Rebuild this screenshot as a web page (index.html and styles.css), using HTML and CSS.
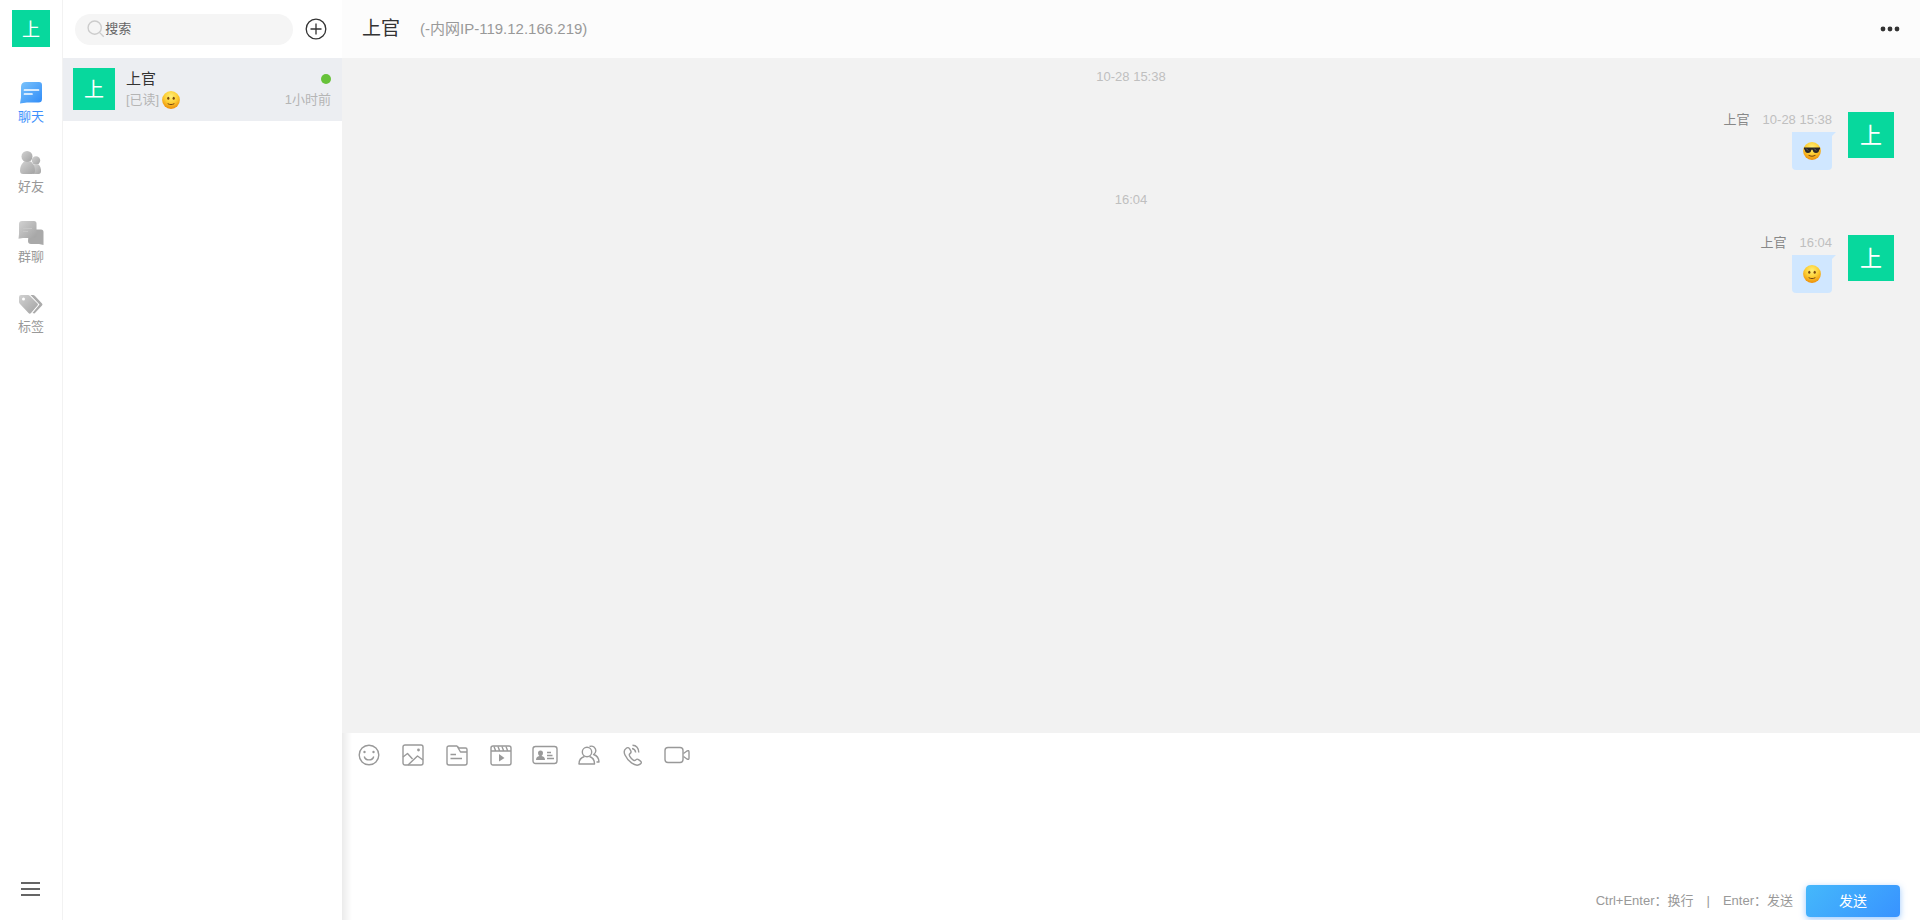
FILE: index.html
```html
<!DOCTYPE html>
<html lang="zh-CN">
<head>
    <meta charset="UTF-8">
    <meta name="viewport" content="width=device-width, initial-scale=1.0">
    <title>聊天</title>
    <link rel="stylesheet" href="styles.css">
</head>
<body>
    <!-- shared gradients and emoji -->
    <svg class="defs" width="0" height="0" aria-hidden="true">
        <defs>
            <linearGradient id="blue" x1="0" y1="0" x2="1" y2="1">
                <stop offset="0" stop-color="#7cc4fb"/>
                <stop offset="1" stop-color="#2f8bf8"/>
            </linearGradient>
            <linearGradient id="grey" x1="0" y1="0" x2="1" y2="1">
                <stop offset="0" stop-color="#d2d2d2"/>
                <stop offset="1" stop-color="#a2a2a2"/>
            </linearGradient>
            <radialGradient id="face" cx="0.5" cy="0.3" r="0.72">
                <stop offset="0" stop-color="#fff07a"/>
                <stop offset="0.5" stop-color="#fdcf35"/>
                <stop offset="1" stop-color="#ec8a05"/>
            </radialGradient>
            <symbol id="emoji-smile" viewBox="0 0 18 18">
                <circle cx="9" cy="9" r="8.9" fill="url(#face)"/>
                <ellipse cx="6.3" cy="7.3" rx="1.1" ry="1.5" fill="#7a4a10"/>
                <ellipse cx="11.7" cy="7.3" rx="1.1" ry="1.5" fill="#7a4a10"/>
                <path d="M6 12.8c1.800 1.100 4.200 1.100 6 0" fill="none" stroke="#7a4a10" stroke-width="1" stroke-linecap="round"/>
            </symbol>
            <symbol id="emoji-cool" viewBox="0 0 18 18">
                <circle cx="9" cy="9" r="8.9" fill="url(#face)"/>
                <path d="M1 5.400h16v1.800l-.8.600c-.3 2.400-1.200 3.200-3.200 3.200-2 0-2.900-1-3.400-3.200h-1.200c-.5 2.200-1.400 3.200-3.400 3.200s-2.900-.8-3.200-3.200L1 7.200z" fill="#2a2624"/>
                <path d="M3.200 6.600l2 2M11.200 6.600l2 2" stroke="#777" stroke-width="0.8"/>
                <path d="M6 13.400c2 1.200 4 1.200 6 0" fill="none" stroke="#7a4a10" stroke-width="1.1" stroke-linecap="round"/>
            </symbol>
        </defs>
    </svg>

    <div class="app">
        <nav class="nav">
            <div class="avatar avatar-nav">上</div>
            <div class="nav-items">
                <a class="nav-item active" href="#chat">
                    <svg viewBox="0 0 24 24">
                        <path d="M7 1h13q3 0 3 3v14q0 3.500-3.500 3.500H8L1 22.500l1-6V6q0-5 5-5z" fill="url(#blue)"/>
                        <path d="M5.500 9h14M5.500 13h7.500" stroke="#fff" stroke-width="1.700" stroke-linecap="round"/>
                    </svg>
                    <span>聊天</span>
                </a>
                <a class="nav-item" href="#friends">
                    <svg viewBox="0 0 24 24">
                        <circle cx="17" cy="9.500" r="4.200" fill="url(#grey)"/>
                        <path d="M14 13.500h5.500q2.500 2 2.500 6.500 0 3-2.500 3H14z" fill="url(#grey)"/>
                        <path d="M5 10.500h7q4 4 4 9 0 3.500-3 3.500H4q-3 0-3-3.500 0-5 4-9z" fill="url(#grey)"/>
                        <circle cx="8" cy="5.500" r="5.500" fill="url(#grey)"/>
                    </svg>
                    <span>好友</span>
                </a>
                <a class="nav-item" href="#groups">
                    <svg class="wide" viewBox="0 0 26 24">
                        <path d="M11 8.500h12q2.500 0 2.500 2.500v13l-4.500-1h-8q-3 0-3-3z" fill="#a9a9a9"/>
                        <path d="M4 0h12q2.500 0 2.500 2.500V14q0 3-3 3H5l-4.500.8L1 13V3q0-3 3-3z" fill="url(#grey)"/>
                        <path d="M5 7.500h9M5 10.500h5" stroke="#c6c6c6" stroke-width="1"/>
                    </svg>
                    <span>群聊</span>
                </a>
                <a class="nav-item" href="#tags">
                    <svg viewBox="0 0 24 24">
                        <path d="M11.500 4h2.500q1 0 2 1l7 7.500q1 1 0 2L15.500 22.500l-2-.5 7-8.500z" fill="#ababab"/>
                        <path d="M0 6q0-2 2-2h7q1 0 2 1l7.500 7.500q1 1 0 2l-6.500 7.500q-1.200 1.300-2.500 0L1 13q-1-1-1-2z" fill="url(#grey)"/>
                        <circle cx="4.500" cy="8" r="1.500" fill="#fff"/>
                    </svg>
                    <span>标签</span>
                </a>
            </div>
            <button class="icon-btn menu-btn" type="button" aria-label="菜单">
                <svg width="20" height="16" viewBox="0 0 20 16"><path d="M0 2h19M0 8h19M0 14h19" stroke="#333" stroke-width="1.700"/></svg>
            </button>
        </nav>

        <aside class="sessions">
            <div class="search-bar">
                <label class="search">
                    <svg width="20" height="20" viewBox="0 0 20 20" fill="none" stroke="#ccc" stroke-width="1.500"><circle cx="8.500" cy="8.500" r="7.300"/><path d="M14 14l4.500 4.500"/></svg>
                    <input type="text" placeholder="搜索" aria-label="搜索">
                </label>
                <button class="icon-btn" type="button" aria-label="添加">
                    <svg width="22" height="22" viewBox="0 0 22 22" fill="none" stroke="#333" stroke-width="1.300"><circle cx="11" cy="11" r="9.800"/><path d="M11 5.500v11M5.500 11h11"/></svg>
                </button>
            </div>
            <div class="session">
                <div class="avatar avatar-session">上</div>
                <div class="session-body">
                    <div class="session-row">
                        <span class="session-name">上官</span>
                        <span class="online"></span>
                    </div>
                    <div class="session-row session-sub">
                        <span class="session-last">[已读] <svg class="emoji" role="img" aria-label="微笑"><use href="#emoji-smile"/></svg></span>
                        <span>1小时前</span>
                    </div>
                </div>
            </div>
        </aside>

        <main class="chat">
            <header class="chat-header">
                <h1>上官</h1>
                <span class="chat-ip">(-内网IP-119.12.166.219)</span>
                <button class="icon-btn more-btn" type="button" aria-label="更多">
                    <svg width="20" height="6" viewBox="0 0 20 6" fill="#333"><circle cx="3" cy="3" r="2.400"/><circle cx="10" cy="3" r="2.400"/><circle cx="17" cy="3" r="2.400"/></svg>
                </button>
            </header>

            <section class="messages">
                <div class="time-line">10-28 15:38</div>
                <div class="message">
                    <div class="message-body">
                        <div class="message-meta"><span class="message-name">上官</span><span>10-28 15:38</span></div>
                        <div class="bubble"><svg class="emoji" role="img" aria-label="酷"><use href="#emoji-cool"/></svg></div>
                    </div>
                    <div class="avatar avatar-message">上</div>
                </div>
                <div class="time-line">16:04</div>
                <div class="message">
                    <div class="message-body">
                        <div class="message-meta"><span class="message-name">上官</span><span>16:04</span></div>
                        <div class="bubble"><svg class="emoji" role="img" aria-label="微笑"><use href="#emoji-smile"/></svg></div>
                    </div>
                    <div class="avatar avatar-message">上</div>
                </div>
            </section>

            <footer class="composer">
                <div class="toolbar">
                    <button class="icon-btn" type="button" aria-label="表情">
                        <svg viewBox="0 0 22 22"><circle cx="11" cy="11" r="9.800"/><path d="M6.300 12.500c1 4.500 8.400 4.500 9.400 0"/><circle class="fill" cx="6.500" cy="8" r="1.200"/><circle class="fill" cx="15.500" cy="8" r="1.200"/></svg>
                    </button>
                    <button class="icon-btn" type="button" aria-label="图片">
                        <svg viewBox="0 0 22 22"><rect x="1" y="1" width="20" height="20" rx="2"/><path d="M1 13l4.500-3.500 5 5.500M6 21l9.500-9 5.500 4"/><circle class="fill" cx="16.500" cy="6" r="1.400"/></svg>
                    </button>
                    <button class="icon-btn" type="button" aria-label="文件">
                        <svg viewBox="0 0 22 22"><path d="M11 2H3Q1 2 1 4v15q0 2 2 2h16q2 0 2-2V8h-6.500zM11.500 2.500l1.500 1.500h6.500q1.500 0 1.500 1.500V8M4.500 10.500H10M4.500 14.500h11.500"/></svg>
                    </button>
                    <button class="icon-btn" type="button" aria-label="视频文件">
                        <svg viewBox="0 0 22 22"><rect x="1" y="2" width="20" height="19" rx="2"/><path d="M1 7h20M4 2.500l1.500 4M8 2.500l1.500 4M12 2.500l1.500 4M16 2.500l1.500 4"/><path class="fill" d="M9 10v7.500l5.500-3.500z"/></svg>
                    </button>
                    <button class="icon-btn" type="button" aria-label="名片">
                        <svg class="wide" viewBox="0 0 26 22"><rect x="1" y="2.500" width="24" height="17" rx="2.500"/><path class="fill" d="M4 16q0-3.500 3.500-4-1.500-1-1.500-3 0-2.500 2.500-2.500T11 9q0 2-1.500 3 3.500.5 3.500 4z"/><path d="M15 8.500h4M15 11.500h5.500M15 14.500h7"/></svg>
                    </button>
                    <button class="icon-btn" type="button" aria-label="群成员">
                        <svg viewBox="0 0 22 22"><circle cx="9" cy="8" r="4.700"/><path d="M6.500 12.500Q1 14 1 20h15.500q0-6-5-7.500M11.500 2.500q2.500-1 4.500.5c2.700 2.200 2.300 6-.5 7.500q5.200 1.500 5.500 7.500h-2.500"/></svg>
                    </button>
                    <button class="icon-btn" type="button" aria-label="语音通话">
                        <svg viewBox="0 0 22 22"><path d="M4 4.500q2-1.800 3.500.2l1.300 2.200q.8 1.500-.8 2.700-1.300 1-.2 2.700 1.500 2.500 3.500 3.800 1.500 1 2.500-.2 1.200-1.400 2.700-.3l2 1.500q1.700 1.400 0 2.800-3.500 3-9-1Q5 15.500 3 11 1 6.700 4 4.500z"/><path d="M10.500 1.200q6 .3 6.300 7.300M10 4.500q3.200.5 3.700 4"/></svg>
                    </button>
                    <button class="icon-btn" type="button" aria-label="视频通话">
                        <svg class="wide" viewBox="0 0 26 22"><rect x="1" y="3.500" width="18" height="15" rx="3"/><path d="M19.500 9.500l3.500-2.500q2-1 2 1v6q0 2-2 1l-3.500-2.500"/></svg>
                    </button>
                </div>
                <textarea class="editor" aria-label="输入消息"></textarea>
                <div class="send-row">
                    <span>Ctrl+Enter：换行</span>
                    <span>|</span>
                    <span>Enter：发送</span>
                    <button class="send-btn" type="button">发送</button>
                </div>
            </footer>
        </main>
    </div>
</body>
</html>
```
FILE: styles.css
```css
* {
    margin: 0;
    padding: 0;
    box-sizing: border-box;
}
body {
    font-family: "Liberation Sans", "Noto Sans CJK SC", sans-serif;
    font-size: 13px;
    line-height: 18px;
    color: #333;
    background-color: #fff;
}
button, input, textarea {
    font: inherit;
    color: inherit;
    border: none;
    outline: none;
    background: none;
}
.defs {
    position: absolute;
}
.app {
    display: flex;
    height: 100vh;
}
.icon-btn {
    display: flex;
    align-items: center;
    justify-content: center;
    cursor: pointer;
}
.emoji {
    width: 18px;
    height: 18px;
}
.avatar {
    display: flex;
    flex-shrink: 0;
    align-items: center;
    justify-content: center;
    padding-top: 2px;
    color: #fff;
    background-color: #07d89d;
}

/* left nav */
.nav {
    display: flex;
    flex-direction: column;
    align-items: center;
    width: 63px;
    padding: 10px 0 20px;
    border-right: 1px solid #f2f2f2;
}
.avatar-nav {
    width: 38px;
    height: 37px;
    font-size: 18px;
}
.nav-items {
    display: flex;
    flex-direction: column;
    gap: 25px;
    margin-top: 34px;
}
.nav-item {
    display: flex;
    flex-direction: column;
    align-items: center;
    color: #999;
    text-decoration: none;
}
.nav-item svg {
    width: 24px;
    height: 24px;
    margin-bottom: 3px;
}
.nav-item svg.wide {
    width: 26px;
}
.nav-item.active {
    color: #3d8ffc;
}
.menu-btn {
    width: 40px;
    height: 22px;
    margin-top: auto;
}

/* session list */
.sessions {
    width: 279px;
}
.search-bar {
    display: flex;
    align-items: center;
    height: 58px;
    padding: 0 15px 0 12px;
    gap: 12px;
}
.search {
    display: flex;
    flex: 1;
    align-items: center;
    height: 31px;
    padding: 0 12px;
    border-radius: 16px;
    background-color: #f5f5f5;
}
.search input {
    width: 100%;
    min-width: 0;
}
.search input::placeholder {
    color: #666;
    opacity: 1;
}
.session {
    display: flex;
    gap: 11px;
    padding: 10px 11px 11px 10px;
    background-color: #eceef2;
}
.avatar-session {
    width: 42px;
    height: 42px;
    font-size: 20px;
}
.session-body {
    flex: 1;
}
.session-row {
    display: flex;
    align-items: center;
    justify-content: space-between;
    height: 21px;
}
.session-name {
    font-size: 15px;
}
.session-sub {
    color: #b5b5b5;
}
.session-last {
    display: flex;
    align-items: center;
    gap: 3px;
}
.online {
    width: 10px;
    height: 10px;
    border-radius: 50%;
    background-color: #67c23a;
}

/* chat */
.chat {
    display: flex;
    flex: 1;
    flex-direction: column;
    min-width: 0;
    background-color: #f2f2f2;
}
.chat-header {
    display: flex;
    align-items: center;
    height: 58px;
    padding: 0 20px;
    background-color: #fcfcfc;
}
.chat-header h1 {
    font-size: 19px;
    font-weight: normal;
}
.chat-ip {
    margin-left: 20px;
    font-size: 15px;
    color: #999;
}
.more-btn {
    height: 20px;
    margin-left: auto;
}
.messages {
    flex: 1;
    overflow: auto;
    color: #bfbfbf;
}
.time-line {
    padding-top: 10px;
    text-align: center;
}
.message {
    display: flex;
    justify-content: flex-end;
    gap: 16px;
    padding: 26px 26px 11px 0;
}
.message-body {
    display: flex;
    flex-direction: column;
    align-items: flex-end;
}
.message-meta {
    display: flex;
    gap: 13px;
    height: 20px;
    line-height: 16px;
}
.message-name {
    color: #888;
}
.bubble {
    position: relative;
    display: flex;
    padding: 10px 11px;
    border-radius: 0 0 4px 4px;
    background-color: #d0e7ff;
}
.bubble::after {
    content: "";
    position: absolute;
    top: 0;
    left: 100%;
    border-top: 4px solid #d0e7ff;
    border-right: 4px solid transparent;
}
.avatar-message {
    width: 46px;
    height: 46px;
    font-size: 22px;
}

/* composer */
.composer {
    display: flex;
    flex-direction: column;
    height: 187px;
    padding: 11px 20px 3px 14px;
    background: linear-gradient(to right, #ebebeb, #fff 10px);
}
.toolbar {
    display: flex;
}
.toolbar .icon-btn {
    width: 26px;
    height: 22px;
    margin-right: 18px;
}
.toolbar svg {
    width: 22px;
    height: 22px;
    fill: none;
    stroke: #999;
    stroke-width: 1.4;
    stroke-linejoin: round;
}
.toolbar svg.wide {
    width: 26px;
}
.toolbar .fill {
    fill: #999;
    stroke: none;
}
.editor {
    flex: 1;
    width: 100%;
    resize: none;
}
.send-row {
    display: flex;
    align-items: center;
    justify-content: flex-end;
    gap: 13px;
    color: #999;
}
.send-btn {
    width: 94px;
    height: 32px;
    border-radius: 4px;
    font-size: 14px;
    color: #fff;
    background: linear-gradient(135deg, #45b8fb, #3893ff);
    box-shadow: 0 2px 6px rgba(56, 147, 255, 0.5);
    cursor: pointer;
}
```
